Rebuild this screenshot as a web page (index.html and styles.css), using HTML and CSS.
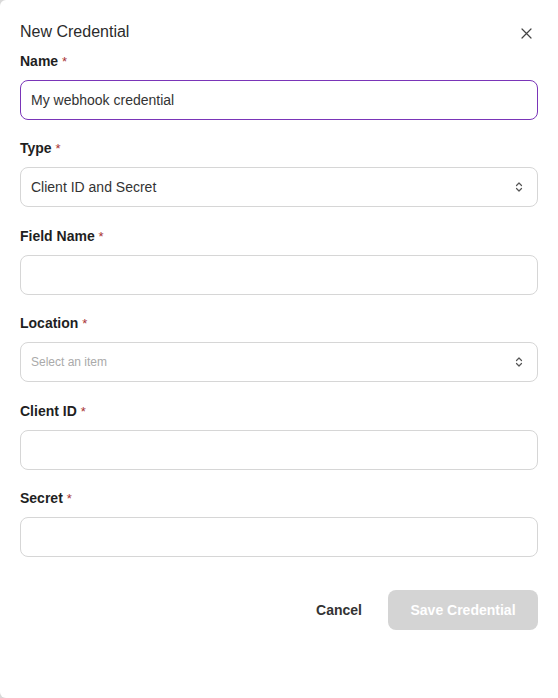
FILE: index.html
```html
<!DOCTYPE html>
<html lang="en">
<head>
<meta charset="utf-8">
<title>New Credential</title>
<link rel="stylesheet" href="styles.css">
</head>
<body>
<div class="dialog">
  <div class="header">
    <h2 class="title">New Credential</h2>
    <button class="close" aria-label="Close">
      <svg width="11" height="11" viewBox="0 0 11 11"><path d="M1 1 L10 10 M10 1 L1 10" stroke="#444" stroke-width="1.2" fill="none" stroke-linecap="round"/></svg>
    </button>
  </div>
  <form class="form">
    <div class="field">
      <label class="label">Name <span class="req">*</span></label>
      <div class="input focused">My webhook credential</div>
    </div>
    <div class="field">
      <label class="label">Type <span class="req">*</span></label>
      <div class="input select"><span>Client ID and Secret</span>
        <svg class="chev" width="8" height="12" viewBox="0 0 8 12"><path d="M1.5 4.5 L4 2 L6.5 4.5 M1.5 7.5 L4 10 L6.5 7.5" stroke="#555" stroke-width="1.2" fill="none" stroke-linecap="round" stroke-linejoin="round"/></svg>
      </div>
    </div>
    <div class="field">
      <label class="label">Field Name <span class="req">*</span></label>
      <div class="input"></div>
    </div>
    <div class="field">
      <label class="label">Location <span class="req">*</span></label>
      <div class="input select"><span class="placeholder">Select an item</span>
        <svg class="chev" width="8" height="12" viewBox="0 0 8 12"><path d="M1.5 4.5 L4 2 L6.5 4.5 M1.5 7.5 L4 10 L6.5 7.5" stroke="#555" stroke-width="1.2" fill="none" stroke-linecap="round" stroke-linejoin="round"/></svg>
      </div>
    </div>
    <div class="field">
      <label class="label">Client ID <span class="req">*</span></label>
      <div class="input"></div>
    </div>
    <div class="field">
      <label class="label">Secret <span class="req">*</span></label>
      <div class="input"></div>
    </div>
  </form>
  <div class="actions">
    <button class="btn cancel">Cancel</button>
    <button class="btn save">Save Credential</button>
  </div>
</div>
</body>
</html>
```
FILE: styles.css
```css
html, body {
  margin: 0;
  padding: 0;
  background: #d9d9d9;
}
body {
  font-family: "Liberation Sans", Arial, sans-serif;
  color: #222;
}
.dialog {
  box-sizing: border-box;
  width: 558px;
  height: 698px;
  background: #fff;
  border-radius: 6px 0 0 6px;
  padding: 22px 20px 0 20px;
  display: flex;
  flex-direction: column;
}
.header {
  display: flex;
  align-items: center;
  justify-content: space-between;
  height: 20px;
}
.title {
  margin: 0;
  font-size: 16px;
  font-weight: normal;
  line-height: 20px;
  color: #2b2b2b;
}
.close {
  border: 0;
  background: none;
  padding: 0;
  width: 11px;
  height: 11px;
  margin-right: 6px;
  margin-top: 2px;
  display: flex;
}
.form {
  margin-top: 10.9px;
  display: flex;
  flex-direction: column;
  gap: 20.5px;
}
.field {
  display: flex;
  flex-direction: column;
}
.label {
  font-size: 14px;
  font-weight: bold;
  line-height: 16px;
  height: 16px;
  margin-bottom: 11px;
  color: #1f1f1f;
}
.req {
  color: #a83232;
  font-weight: normal;
  font-size: 13px;
}
.input {
  box-sizing: border-box;
  height: 40px;
  border: 1px solid #d6d6d6;
  border-radius: 8px;
  padding: 0 10px;
  display: flex;
  align-items: center;
  justify-content: space-between;
  font-size: 14px;
  color: #333;
}
.input.focused {
  border-color: #7a35b8;
}
.placeholder {
  font-size: 12px;
  color: #aaa;
}
.chev {
  margin-right: 4px;
}
.actions {
  margin-top: 32.5px;
  display: flex;
  justify-content: flex-end;
  gap: 10px;
}
.btn {
  font-family: "Liberation Sans", Arial, sans-serif;
  font-size: 14px;
  font-weight: bold;
  height: 40px;
  border: 0;
  border-radius: 8px;
  cursor: pointer;
}
.cancel {
  background: none;
  color: #333;
  padding: 0 16px;
}
.save {
  background: #d4d4d4;
  color: #fff;
  width: 150px;
  padding: 0;
}
```
